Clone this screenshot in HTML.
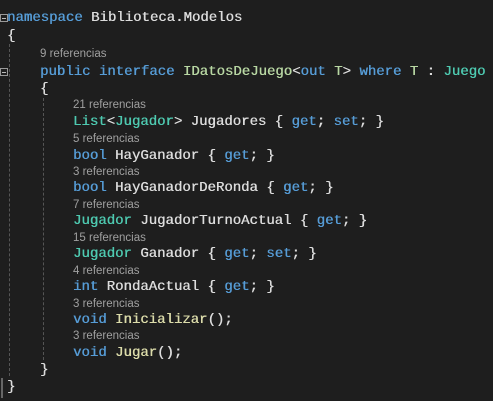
<!DOCTYPE html>
<html><head><style>
html,body{margin:0;padding:0;background:#1e1e1e;width:493px;height:401px;overflow:hidden}
.l{position:absolute;white-space:pre;font-family:"Liberation Mono",monospace;font-size:14px;color:#dcdcdc;line-height:17px;text-shadow:0.4px 0 0 currentColor}
.r{position:absolute;white-space:pre;font-family:"Liberation Sans",sans-serif;font-size:11.5px;color:#a0a0a0;line-height:13px}
.k{color:#569cd6}.t{color:#4ec9b0}.i{color:#b8d7a3}.m{color:#dcdcaa}
.g{position:absolute;width:0;border-left:1px dashed #555}
.box{position:absolute;left:0;width:6px;height:6px;border:1px solid #999;}
.box:after{content:"";position:absolute;left:1px;top:3px;width:4px;height:1px;background:#bbb}
</style></head><body>
<div class="g" style="left:9px;top:44px;height:332px"></div>
<div class="g" style="left:43px;top:98px;height:262px"></div>
<div style="position:absolute;left:1px;top:378px;width:2px;height:20px;background:#666"></div>
<div class="box" style="top:14px"></div>
<div class="box" style="top:68px"></div>
<div class="l" style="left:7px;top:10px"><span class="k">namespace</span> Biblioteca.Modelos</div>
<div class="l" style="left:7px;top:28px">{</div>
<div class="r" style="left:40px;top:48px">9 referencias</div>
<div class="l" style="left:40px;top:64px"><span class="k">public</span> <span class="k">interface</span> <span class="i">IDatosDeJuego</span>&lt;<span class="k">out</span> <span class="i">T</span>&gt; <span class="k">where</span> <span class="i">T</span> : <span class="t">Juego</span></div>
<div class="l" style="left:40px;top:81px">{</div>
<div class="r" style="left:73px;top:99px">21 referencias</div>
<div class="l" style="left:73px;top:114px"><span class="t">List</span>&lt;<span class="t">Jugador</span>&gt; Jugadores { <span class="k">get</span>; <span class="k">set</span>; }</div>
<div class="r" style="left:73px;top:133px">5 referencias</div>
<div class="l" style="left:73px;top:148px"><span class="k">bool</span> HayGanador { <span class="k">get</span>; }</div>
<div class="r" style="left:73px;top:166px">3 referencias</div>
<div class="l" style="left:73px;top:180px"><span class="k">bool</span> HayGanadorDeRonda { <span class="k">get</span>; }</div>
<div class="r" style="left:73px;top:199px">7 referencias</div>
<div class="l" style="left:73px;top:213px"><span class="t">Jugador</span> JugadorTurnoActual { <span class="k">get</span>; }</div>
<div class="r" style="left:73px;top:232px">15 referencias</div>
<div class="l" style="left:73px;top:246px"><span class="t">Jugador</span> Ganador { <span class="k">get</span>; <span class="k">set</span>; }</div>
<div class="r" style="left:73px;top:265px">4 referencias</div>
<div class="l" style="left:73px;top:279px"><span class="k">int</span> RondaActual { <span class="k">get</span>; }</div>
<div class="r" style="left:73px;top:298px">3 referencias</div>
<div class="l" style="left:73px;top:312px"><span class="k">void</span> <span class="m">Inicializar</span>();</div>
<div class="r" style="left:73px;top:330px">3 referencias</div>
<div class="l" style="left:73px;top:345px"><span class="k">void</span> <span class="m">Jugar</span>();</div>
<div class="l" style="left:40px;top:362px">}</div>
<div class="l" style="left:7px;top:379px">}</div>
</body></html>
